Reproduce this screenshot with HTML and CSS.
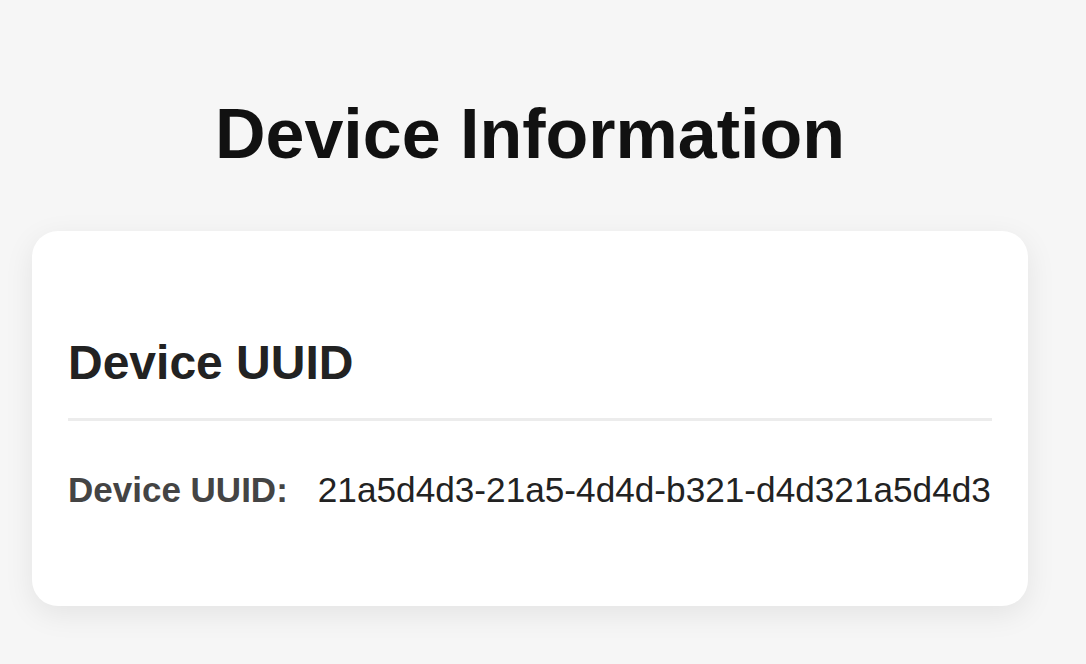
FILE: index.html
```html
<!DOCTYPE html>
<html lang="en">
<head>
<meta charset="utf-8">
<title>Device Information</title>
<link rel="stylesheet" href="styles.css">
</head>
<body>
  <main class="page">
    <h1 class="page-title">Device Information</h1>
    <section class="card">
      <h2 class="card-title">Device UUID</h2>
      <div class="info-row">
        <span class="info-label">Device UUID:</span>
        <span class="info-value">21a5d4d3-21a5-4d4d-b321-d4d321a5d4d3</span>
      </div>
    </section>
  </main>
</body>
</html>
```

FILE: styles.css
```css
html, body {
  margin: 0;
  padding: 0;
  background: #f6f6f6;
  font-family: "Liberation Sans", Arial, sans-serif;
}

.page {
  width: 996px;
  margin-left: 32px;
  padding-top: 94px;
  padding-bottom: 40px;
}

.page-title {
  margin: 0 0 57px;
  font-size: 70px;
  font-weight: 700;
  line-height: normal;
  color: #111;
  text-align: center;
}

.card {
  background: #fff;
  border-radius: 26px;
  padding: 36px 36px 96px;
  box-shadow: 0 8px 30px rgba(0, 0, 0, 0.08);
}

.card-title {
  margin: 68px 0 0;
  padding-bottom: 28px;
  border-bottom: 3px solid #ececec;
  font-size: 48px;
  font-weight: 700;
  line-height: normal;
  color: #222;
}

.info-row {
  display: flex;
  gap: 30px;
  margin-top: 49px;
  font-size: 35px;
  line-height: normal;
}

.info-label {
  font-weight: 700;
  color: #444;
}

.info-value {
  font-size: 35.2px;
  color: #222;
}
```
